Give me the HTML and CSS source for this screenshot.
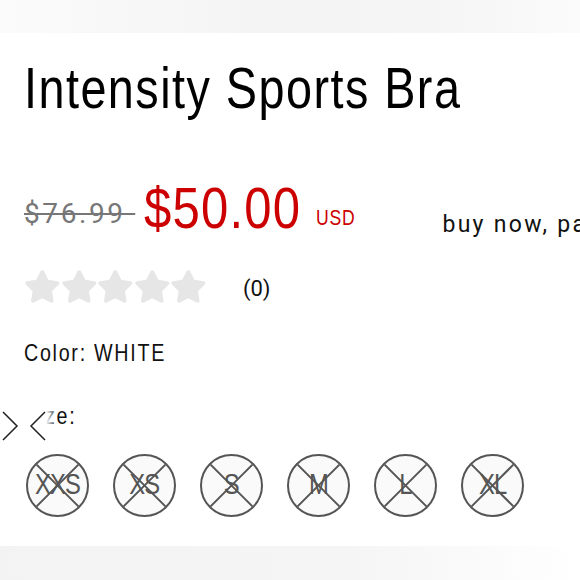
FILE: index.html
```html
<!DOCTYPE html>
<html lang="en">
<head>
<meta charset="utf-8">
<title>Intensity Sports Bra</title>
<link rel="stylesheet" href="styles.css">
</head>
<body>
<div class="topbar"></div>
<main class="product">
  <h1 class="title">Intensity Sports Bra</h1>
  <div class="price-row">
    <span class="old-price">$76.99&nbsp;</span>
    <span class="now-price">$50.00</span>
    <span class="currency">USD</span>
    <span class="bnpl">buy now, pay later</span>
  </div>
  <div class="rating">
    <div class="stars">
      <svg class="star" viewBox="0 0 576 512"><path d="M259.3 17.8L194 150.2 47.9 171.5c-26.2 3.8-36.7 36.1-17.7 54.6l105.7 103-25 145.5c-4.5 26.3 23.2 46 46.4 33.7L288 439.6l130.7 68.7c23.2 12.2 50.9-7.4 46.4-33.7l-25-145.5 105.7-103c19-18.5 8.5-50.8-17.7-54.6L382 150.2 316.7 17.8c-11.7-23.6-45.6-23.9-57.4 0z"/></svg>
      <svg class="star" viewBox="0 0 576 512"><path d="M259.3 17.8L194 150.2 47.9 171.5c-26.2 3.8-36.7 36.1-17.7 54.6l105.7 103-25 145.5c-4.5 26.3 23.2 46 46.4 33.7L288 439.6l130.7 68.7c23.2 12.2 50.9-7.4 46.4-33.7l-25-145.5 105.7-103c19-18.5 8.5-50.8-17.7-54.6L382 150.2 316.7 17.8c-11.7-23.6-45.6-23.9-57.4 0z"/></svg>
      <svg class="star" viewBox="0 0 576 512"><path d="M259.3 17.8L194 150.2 47.9 171.5c-26.2 3.8-36.7 36.1-17.7 54.6l105.7 103-25 145.5c-4.5 26.3 23.2 46 46.4 33.7L288 439.6l130.7 68.7c23.2 12.2 50.9-7.4 46.4-33.7l-25-145.5 105.7-103c19-18.5 8.5-50.8-17.7-54.6L382 150.2 316.7 17.8c-11.7-23.6-45.6-23.9-57.4 0z"/></svg>
      <svg class="star" viewBox="0 0 576 512"><path d="M259.3 17.8L194 150.2 47.9 171.5c-26.2 3.8-36.7 36.1-17.7 54.6l105.7 103-25 145.5c-4.5 26.3 23.2 46 46.4 33.7L288 439.6l130.7 68.7c23.2 12.2 50.9-7.4 46.4-33.7l-25-145.5 105.7-103c19-18.5 8.5-50.8-17.7-54.6L382 150.2 316.7 17.8c-11.7-23.6-45.6-23.9-57.4 0z"/></svg>
      <svg class="star" viewBox="0 0 576 512"><path d="M259.3 17.8L194 150.2 47.9 171.5c-26.2 3.8-36.7 36.1-17.7 54.6l105.7 103-25 145.5c-4.5 26.3 23.2 46 46.4 33.7L288 439.6l130.7 68.7c23.2 12.2 50.9-7.4 46.4-33.7l-25-145.5 105.7-103c19-18.5 8.5-50.8-17.7-54.6L382 150.2 316.7 17.8c-11.7-23.6-45.6-23.9-57.4 0z"/></svg>
    </div>
    <span class="review-count">(0)</span>
  </div>
  <div class="option-label color-label">Color: WHITE</div>
  <div class="option-label size-label">Size:</div>
  <div class="sizes">
    <div class="size"><svg class="cross" viewBox="0 0 59 59"><line x1="8.6" y1="8.6" x2="50.4" y2="50.4"/><line x1="50.4" y1="8.6" x2="8.6" y2="50.4"/></svg><span class="size-text">XXS</span></div>
    <div class="size"><svg class="cross" viewBox="0 0 59 59"><line x1="8.6" y1="8.6" x2="50.4" y2="50.4"/><line x1="50.4" y1="8.6" x2="8.6" y2="50.4"/></svg><span class="size-text">XS</span></div>
    <div class="size"><svg class="cross" viewBox="0 0 59 59"><line x1="8.6" y1="8.6" x2="50.4" y2="50.4"/><line x1="50.4" y1="8.6" x2="8.6" y2="50.4"/></svg><span class="size-text">S</span></div>
    <div class="size"><svg class="cross" viewBox="0 0 59 59"><line x1="8.6" y1="8.6" x2="50.4" y2="50.4"/><line x1="50.4" y1="8.6" x2="8.6" y2="50.4"/></svg><span class="size-text">M</span></div>
    <div class="size"><svg class="cross" viewBox="0 0 59 59"><line x1="8.6" y1="8.6" x2="50.4" y2="50.4"/><line x1="50.4" y1="8.6" x2="8.6" y2="50.4"/></svg><span class="size-text">L</span></div>
    <div class="size"><svg class="cross" viewBox="0 0 59 59"><line x1="8.6" y1="8.6" x2="50.4" y2="50.4"/><line x1="50.4" y1="8.6" x2="8.6" y2="50.4"/></svg><span class="size-text">XL</span></div>
  </div>
</main>
<div class="bottombar"></div>
<div class="carousel-nav">
  <svg class="chev" viewBox="0 0 50 32"><polyline points="3,2 17,16 3,30"/><polyline points="45,2 31,16 45,30"/></svg>
</div>
</body>
</html>
```
FILE: styles.css
```css
html, body {
  margin: 0;
  padding: 0;
}
body {
  width: 580px;
  height: 580px;
  overflow: hidden;
  position: relative;
  background: #fff;
  color: #111;
  font-family: "Liberation Sans", Arial, sans-serif;
}
.topbar {
  height: 33px;
  background: linear-gradient(to right, #fbfbfb 0%, #f4f4f4 45%, #f5f5f5 75%, #fbfbfb 100%);
}
.product {
  padding: 27px 0 0 24px;
  display: flex;
  flex-direction: column;
  align-items: flex-start;
}
/* condensed look: the page's condensed grotesque is narrowed from Liberation Sans */
.title {
  margin: 0;
  font-weight: normal;
  font-size: 57px;
  line-height: 57px;
  letter-spacing: 1.8px;
  white-space: nowrap;
  color: #000;
  transform: scaleX(0.82);
  transform-origin: left center;
}
.price-row {
  margin-top: 63px;
  display: flex;
  align-items: flex-start;
  white-space: nowrap;
}
.old-price {
  font-family: Roboto, "Liberation Sans", sans-serif;
  font-size: 28px;
  line-height: 28px;
  letter-spacing: 2.6px;
  color: #777;
  text-decoration: line-through;
  text-decoration-thickness: 2px;
  margin-top: 20px;
}
.now-price {
  display: inline-block;
  font-size: 57px;
  line-height: 57px;
  letter-spacing: 1.4px;
  color: #cc0000;
  margin-left: 9px;
  margin-right: -25px;
  transform: scaleX(0.86);
  transform-origin: left center;
}
.currency {
  display: inline-block;
  font-size: 22px;
  line-height: 22px;
  letter-spacing: 1px;
  color: #cc0000;
  margin-left: 14px;
  margin-right: -10px;
  margin-top: 27px;
  transform: scaleX(0.8);
  transform-origin: left center;
}
.bnpl {
  font-family: Roboto, "Liberation Sans", sans-serif;
  font-size: 23px;
  line-height: 23px;
  letter-spacing: 2.3px;
  color: #111;
  margin-left: 87px;
  margin-top: 33px;
}
.rating {
  margin-top: 33px;
  display: flex;
  align-items: flex-start;
}
.stars {
  display: flex;
}
.star {
  display: block;
  width: 36.6px;
  height: 33px;
  fill: #e6e6e6;
}
.review-count {
  font-family: Roboto, "Liberation Sans", sans-serif;
  font-size: 22px;
  line-height: 22px;
  margin-left: 36px;
  margin-top: 8px;
  color: #111;
}
.option-label {
  font-size: 24px;
  line-height: 24px;
  letter-spacing: 2.1px;
  color: #111;
  white-space: nowrap;
  transform: scaleX(0.82);
  transform-origin: left center;
}
.color-label {
  margin-top: 38px;
}
.size-label {
  margin-top: 39px;
}
.sizes {
  margin-top: 26px;
  margin-left: 2px;
  display: flex;
  gap: 24px;
}
.size {
  position: relative;
  width: 63px;
  height: 63px;
  box-sizing: border-box;
  border: 2px solid #555;
  border-radius: 50%;
  background: #fafafa;
  display: grid;
  place-items: center;
}
.cross {
  position: absolute;
  inset: 0;
  width: 59px;
  height: 59px;
  stroke: #555;
  stroke-width: 2;
}
.size-text {
  position: relative;
  font-size: 29px;
  line-height: 29px;
  letter-spacing: -1px;
  color: #555;
  margin-top: -3px;
  transform: scaleX(0.82);
}
.bottombar {
  position: absolute;
  left: 0;
  right: 0;
  bottom: 0;
  height: 34px;
  background: linear-gradient(to right, #f3f3f3 0%, #f5f5f5 60%, #fbfbfb 85%, #fff 100%);
}
.carousel-nav {
  position: absolute;
  left: 0;
  top: 400px;
  width: 60px;
  height: 46px;
  background: linear-gradient(to right, #fff 0, #fff 46px, rgba(255,255,255,0) 58px);
}
.chev {
  position: absolute;
  left: 0;
  top: 10px;
  width: 50px;
  height: 32px;
  fill: none;
  stroke: #222;
  stroke-width: 1.5;
}
```
